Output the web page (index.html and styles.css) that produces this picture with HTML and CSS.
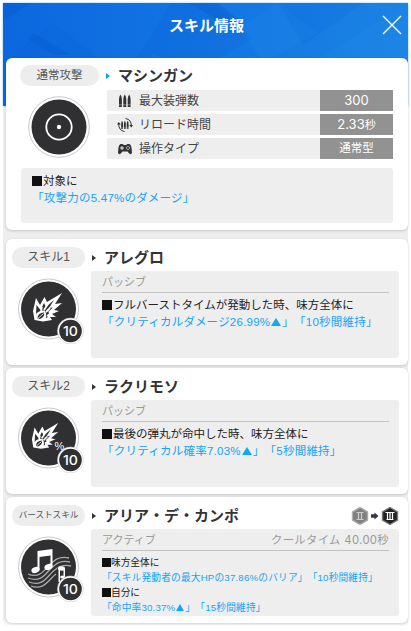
FILE: index.html
```
<!DOCTYPE html>
<html lang="ja">
<head>
    <meta charset="UTF-8">
    <meta name="viewport" content="width=device-width, initial-scale=1.0">
    <title>スキル情報</title>
    <link rel="stylesheet" href="styles.css">
</head>
<body>
    <svg class="defs" width="0" height="0">
        <defs>
            <symbol id="bullets" viewBox="0 0 12 14">
                <path d="M0 13V5Q.2 2 1.4 .5Q2.7 2 2.9 5V13zM4.3 13V5Q4.5 2 5.8 .5Q7.1 2 7.3 5V13zM8.7 13V5Q8.9 2 10.2 .5Q11.4 2 11.6 5V13z"/>
                <path d="M0 10.8H12" stroke="#eee" stroke-width=".4"/>
            </symbol>
            <symbol id="burst" viewBox="0 0 32 30">
                <path fill="#fff" d="M2.500 27L1 18L4 5L8 12L12.500 4L15 9L30 0L23 11L30 10L22 17L27 18L20 21L24 24L18 24L20 27L11 28.500z"/>
                <path fill="#303032" d="M4 21L4.500 12L8.500 17L12 10L14 14L22 7L17 15L21 14.500L16 19L17.500 20L15 22L15.500 24.500L14 25Q15 20 12.500 17.500Q7 17 4 21z"/>
                <path fill="none" stroke="#fff" stroke-width="1.800" d="M16.500 10L12 17M18 15L14 19M10 14L9 18"/>
                <path fill="#303032" d="M5.500 25.500Q5.500 20 12 19.500Q13 24 8 26z"/>
                <path fill="none" stroke="#fff" stroke-width=".9" d="M6 25.500L11.500 20.500"/>
            </symbol>
        </defs>
    </svg>

    <div class="panel">
        <header class="header">
            <svg class="facets" viewBox="0 0 405 103" preserveAspectRatio="none">
                <path fill="#0860d6" opacity=".2" d="M80 103L130 60L168 0H210L250 35L190 72L150 50L120 103z"/>
                <path fill="#0758ca" opacity=".35" d="M0 18L28 0H0zM30 30L68 52H50L25 36zM185 0H215L240 20L226 23z"/>
                <path fill="#2792ed" opacity=".14" d="M237 25L275 0L315 30L260 60zM320 53L405 0V60L350 70z"/>
                <path fill="#075dd5" opacity=".15" d="M275 0H360L300 42zM0 60L50 20L95 55H0z"/>
            </svg>
            <h1>スキル情報</h1>
            <svg class="close" viewBox="0 0 20 20"><path d="M1 1L19 19M19 1L1 19" fill="none" stroke="#fff" stroke-width="1.4"/></svg>
        </header>

        <main class="cards">
            <section class="card normal">
                <div class="card-head">
                    <span class="pill">通常攻撃</span>
                    <i class="arrow blue"></i>
                    <h2>マシンガン</h2>
                </div>
                <div class="stats">
                    <div class="icon-wrap">
                        <svg class="skill-icon" viewBox="0 0 62 62">
                            <circle cx="31" cy="31" r="30.300" fill="#fff" stroke="#c9c9c9"/>
                            <circle cx="31" cy="31" r="27.500" fill="#303032"/>
                            <circle cx="31" cy="31" r="12.700" fill="none" stroke="#fff" stroke-width="1.8"/>
                            <circle cx="31" cy="31" r="2.200" fill="#fff"/>
                        </svg>
                    </div>
                    <div class="rows">
                        <div class="row">
                            <svg viewBox="0 0 16 16"><use href="#bullets" x="2" y="1" width="12" height="14"/></svg>
                            <span class="name">最大装弾数</span><span class="value wide">300</span>
                        </div>
                        <div class="row">
                            <svg viewBox="0 0 16 16">
                                <use href="#bullets" x="4" y="3.500" width="8" height="9"/>
                                <path fill="none" stroke="#333" d="M8.500 1.500Q14.500 2.500 14.300 9M7.500 14.500Q1.500 13.500 1.700 6.500"/>
                                <path d="M12.200 8H16L14.300 10.500zM0 7.500L1.800 5L3.800 7.500z"/>
                            </svg>
                            <span class="name">リロード時間</span><span class="value wide">2.33<small>秒</small></span>
                        </div>
                        <div class="row">
                            <svg viewBox="0 0 16 16">
                                <path d="M3.500 3H6L6.500 4H9.500L10 3H12.500Q14 3.500 14.600 7L15 12Q14 14 12.200 12.500L10.500 10.500H5.500L3.800 12.500Q2 14 1 12L1.400 7Q2 3.500 3.500 3z"/>
                                <path fill="none" stroke="#eee" stroke-width="1" d="M5 5V9M3 7H7"/>
                                <g fill="#eee"><circle cx="11" cy="5.400" r=".7"/><circle cx="11" cy="8.400" r=".7"/><circle cx="9.500" cy="6.900" r=".7"/><circle cx="12.500" cy="6.900" r=".7"/></g>
                            </svg>
                            <span class="name">操作タイプ</span><span class="value">通常型</span>
                        </div>
                    </div>
                </div>
                <div class="box">
                    <p><b class="sq"></b>対象に</p>
                    <p class="effect">「攻撃力の5.47%のダメージ」</p>
                </div>
            </section>

            <section class="card">
                <div class="card-head">
                    <span class="pill">スキル1</span>
                    <i class="arrow"></i>
                    <h2>アレグロ</h2>
                </div>
                <div class="body">
                    <svg class="skill-icon" viewBox="0 0 66 66">
                        <circle cx="30.500" cy="31" r="30" fill="#fff" stroke="#c9c9c9"/>
                        <circle cx="30.500" cy="31" r="27.500" fill="#303032"/>
                        <use href="#burst" x="14" y="15" width="32" height="30"/>
                        <circle cx="52.500" cy="53" r="13" fill="#fff" stroke="#c9c9c9" stroke-width=".6"/>
                        <circle cx="52.500" cy="53" r="11.300" fill="#303032"/>
                        <text class="level" x="45" y="57.500" textLength="15" lengthAdjust="spacingAndGlyphs">10</text>
                    </svg>
                    <div class="box">
                        <div class="kind"><span>パッシブ</span></div>
                        <p><b class="sq"></b>フルバーストタイムが発動した時、味方全体に</p>
                        <p class="effect">「クリティカルダメージ26.99%<i class="up"></i>」「10秒間維持」</p>
                    </div>
                </div>
            </section>

            <section class="card">
                <div class="card-head">
                    <span class="pill">スキル2</span>
                    <i class="arrow"></i>
                    <h2>ラクリモソ</h2>
                </div>
                <div class="body">
                    <svg class="skill-icon" viewBox="0 0 66 66">
                        <circle cx="30.500" cy="31" r="30" fill="#fff" stroke="#c9c9c9"/>
                        <circle cx="30.500" cy="31" r="27.500" fill="#303032"/>
                        <use href="#burst" x="13" y="15" width="29" height="29"/>
                        <text class="percent" x="36.500" y="43">%</text>
                        <circle cx="52.500" cy="53" r="13" fill="#fff" stroke="#c9c9c9" stroke-width=".6"/>
                        <circle cx="52.500" cy="53" r="11.300" fill="#303032"/>
                        <text class="level" x="45" y="57.500" textLength="15" lengthAdjust="spacingAndGlyphs">10</text>
                    </svg>
                    <div class="box">
                        <div class="kind"><span>パッシブ</span></div>
                        <p><b class="sq"></b>最後の弾丸が命中した時、味方全体に</p>
                        <p class="effect">「クリティカル確率7.03%<i class="up"></i>」「5秒間維持」</p>
                    </div>
                </div>
            </section>

            <section class="card burst">
                <div class="card-head">
                    <span class="pill small">バーストスキル</span>
                    <i class="arrow"></i>
                    <h2>アリア・デ・カンポ</h2>
                    <svg class="stage" viewBox="0 0 48 20">
                        <path fill="#808080" stroke="#aaa" stroke-width="1.400" d="M9 1.500L16.500 5.800V14.200L9 18.500L1.500 14.200V5.800z"/>
                        <path fill="none" stroke="#ccc" stroke-width="1.200" d="M5.500 6.500H12.500M5.500 13.500H12.500M7.500 6.500V13.500M10.500 6.500V13.500"/>
                        <path fill="#333a44" d="M20 8.300H23.500V6.500L27.500 10L23.500 13.500V11.700H20z"/>
                        <path fill="#222" stroke="#777" stroke-width="1.400" d="M39 1.500L46.500 5.800V14.200L39 18.500L31.500 14.200V5.800z"/>
                        <path fill="none" stroke="#fff" stroke-width="1.200" d="M34.500 6.500H43.500M35.500 13.500H42.500M36.500 6.500V13.500M39 6.500V13.500M41.500 6.500V13.500"/>
                    </svg>
                </div>
                <div class="body">
                    <svg class="skill-icon" viewBox="0 0 66 66">
                        <circle cx="30.500" cy="31" r="30" fill="#fff" stroke="#c9c9c9"/>
                        <circle cx="30.500" cy="31" r="27.500" fill="#303032"/>
                        <g fill="none" stroke="#aaa" stroke-width="1.300">
                            <path d="M10 38C24 44 28 30 36 25Q42 20 51 22M10 42C25 48 29 34 37 29Q43 24 52 26M11 46C26 52 30 38 38 33Q44 28 53 30M13 50C26 55 31 43 38 38"/>
                        </g>
                        <path fill="#fff" d="M19.500 15L34.500 13V30H32.500V19.500L21.500 21V34H19.500z"/>
                        <ellipse cx="17.500" cy="34" rx="4.200" ry="2.900" fill="#fff" transform="rotate(-20 17.500 34)"/>
                        <ellipse cx="30.500" cy="31" rx="4.200" ry="2.900" fill="#fff" transform="rotate(-20 30.500 31)"/>
                        <path fill="#303032" d="M39.500 31H48V47H39.500z"/>
                        <path fill="#fff" d="M40.500 31H42V46H40.500zM45.500 33H47V41H45.500z"/>
                        <ellipse cx="43.500" cy="32.500" rx="3.500" ry="2.200" fill="#fff"/>
                        <ellipse cx="44.500" cy="41" rx="2.300" ry="1.500" fill="#fff"/>
                        <circle cx="52.500" cy="53" r="13" fill="#fff" stroke="#c9c9c9" stroke-width=".6"/>
                        <circle cx="52.500" cy="53" r="11.300" fill="#303032"/>
                        <text class="level" x="45" y="57.500" textLength="15" lengthAdjust="spacingAndGlyphs">10</text>
                    </svg>
                    <div class="box">
                        <div class="kind"><span>アクティブ</span><span class="cooltime">クールタイム 40.00秒</span></div>
                        <p><b class="sq"></b>味方全体に</p>
                        <p class="effect">「スキル発動者の最大HPの37.86%のバリア」「10秒間維持」</p>
                        <p><b class="sq"></b>自分に</p>
                        <p class="effect">「命中率30.37%<i class="up"></i>」「15秒間維持」</p>
                    </div>
                </div>
            </section>
        </main>
    </div>
</body>
</html>
```
FILE: styles.css
```
* {
    box-sizing: border-box;
}

body {
    margin: 0;
    height: 631px;
    padding: 3px 3px 0;
    overflow: hidden;
    background: #fff;
    color: #222;
    font-family: "Liberation Sans", "Noto Sans CJK JP", sans-serif;
    text-spacing-trim: space-all;
}

h1, h2, p {
    margin: 0;
}

svg {
    display: block;
    flex: none;
}

.defs {
    position: absolute;
}

.panel {
    width: 405px;
    height: 623px;
    background: linear-gradient(#eee, #eee 615px, #fff);
}

.header {
    position: relative;
    height: 103px;
    background: linear-gradient(90deg, #0c67df, #1478e3 60%, #1a83e3);
    box-shadow: 0 0 2px #70bfff;
}

.facets {
    width: 405px;
    height: 103px;
}

h1 {
    position: absolute;
    top: 10px;
    width: 100%;
    padding-left: 2px;
    text-align: center;
    font-size: 15px;
    line-height: 24px;
    color: #fff;
    font-family: "Noto Sans CJK JP", sans-serif;
}

.close {
    position: absolute;
    left: 379px;
    top: 12px;
    width: 20px;
    height: 20px;
}

/* cards slide up over the lower half of the header */
.cards {
    position: relative;
    margin: -48px 0 0 3px;
    width: 402px;
    display: flex;
    flex-direction: column;
}

.card {
    height: 126px;
    margin-bottom: 3px;
    padding: 8px 9px 0 6px;
    background: #fff;
    border-radius: 6px;
    box-shadow: 0 1px 3px rgba(0, 0, 0, .18);
}

.card.normal {
    height: 172px;
    margin-bottom: 9px;
    padding: 7px 15px 0 14px;
}

.card-head {
    display: flex;
    align-items: center;
    height: 21px;
}

.pill {
    width: 73px;
    height: 21px;
    border-radius: 11px;
    background: #ededed;
    color: #555;
    text-align: center;
    font-size: 12px;
    line-height: 21px;
    white-space: nowrap;
}

.normal .pill {
    width: 79px;
    font-size: 11.5px;
}

.pill.small {
    font-size: 8.6px;
}

.arrow {
    margin: 0 8px 0 7px;
    border-left: 4px solid #333;
    border-top: 3.500px solid transparent;
    border-bottom: 3.500px solid transparent;
}

.arrow.blue {
    border-left-color: #08a5f5;
}

h2 {
    font-size: 15px;
    line-height: 20px;
    color: #333;
    white-space: nowrap;
}

.stats {
    display: flex;
    margin-top: 4px;
}

.icon-wrap {
    width: 87px;
    padding: 6px 0 0 8px;
}

.icon-wrap .skill-icon {
    width: 62px;
    height: 62px;
    margin: 0;
}

.rows {
    flex: 1;
    display: flex;
    flex-direction: column;
    gap: 3px;
}

.row {
    display: flex;
    align-items: center;
    height: 21px;
    background: #eee;
    border-radius: 1px;
    line-height: 21px;
}

.row svg {
    width: 16px;
    height: 16px;
    margin: 0 6px 0 10px;
    fill: #333;
}

.name {
    flex: 1;
    padding-top: 1px;
    font-size: 12px;
    color: #444;
}

.value {
    width: 73px;
    height: 21px;
    background: #929292;
    color: #fff;
    font-size: 11.5px;
    text-align: center;
}

.value.wide {
    font-family: "Inter", "Noto Sans CJK JP", sans-serif;
    font-size: 13px;
}

.value small {
    font-size: 11px;
}

.box {
    height: 87px;
    padding: 3px 10px 0 11px;
    background: #eee;
    border-radius: 3px;
    font-size: 11.500px;
    line-height: 17px;
    white-space: nowrap;
}

.normal .box {
    width: 372px;
    height: 55px;
    margin: 9px 0 0 1px;
    padding-top: 5px;
}

.sq {
    display: inline-block;
    width: 10px;
    height: 10px;
    margin-right: 1px;
    vertical-align: -1px;
    background: #111;
}

.effect {
    color: #14a5f5;
    letter-spacing: .24px;
}

.up {
    display: inline-block;
    margin: 0 1px;
    border: 5px solid transparent;
    border-top: 0;
    border-bottom: 8px solid #14a5f5;
}

.body {
    display: flex;
    margin-top: 3px;
}

.skill-icon {
    width: 66px;
    height: 66px;
    margin: 7px 7px 0 6px;
}

.body .box {
    width: 308px;
}

.level {
    fill: #fff;
    font: 500 13px "Inter", sans-serif;
}

.percent {
    fill: #fff;
    font: 11px "Liberation Sans", sans-serif;
}

.kind {
    display: flex;
    justify-content: space-between;
    height: 19px;
    margin-bottom: 4px;
    border-bottom: 1px solid #c4c4c4;
    color: #999;
    font-size: 11px;
}

.cooltime {
    font-family: "Inter", "Noto Sans CJK JP", sans-serif;
    font-size: 11.3px;
    letter-spacing: .35px;
}

.stage {
    width: 48px;
    height: 20px;
    margin-left: auto;
}

.burst .box {
    font-size: 9.700px;
    line-height: 15px;
}

.burst .sq {
    width: 9px;
    height: 9px;
    margin-right: 0;
}

.burst .effect {
    letter-spacing: .18px;
}

.burst .up {
    border-width: 0 4px 7px;
}

.burst .kind {
    height: 19px;
    line-height: 17px;
    margin-bottom: 4px;
}
```
